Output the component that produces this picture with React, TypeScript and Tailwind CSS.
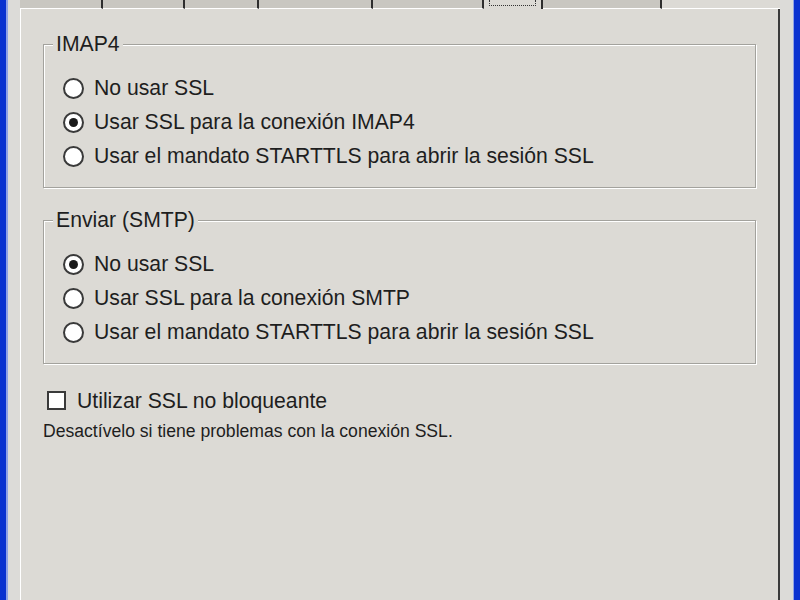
import { useState } from "react";

type Option = { id: string; label: string };

const imapOptions: Option[] = [
  { id: "none", label: "No usar SSL" },
  { id: "ssl", label: "Usar SSL para la conexión IMAP4" },
  { id: "starttls", label: "Usar el mandato STARTTLS para abrir la sesión SSL" },
];

const smtpOptions: Option[] = [
  { id: "none", label: "No usar SSL" },
  { id: "ssl", label: "Usar SSL para la conexión SMTP" },
  { id: "starttls", label: "Usar el mandato STARTTLS para abrir la sesión SSL" },
];

// tab widths along the strip, the selected one is drawn raised
const tabs = [83, 82, 74, 114, 111, 59, 119];
const selectedTab = 5;

function Radio({ checked, label, onClick }: { checked: boolean; label: string; onClick: () => void }) {
  return (
    <div className="flex items-center h-[34px] cursor-default" onClick={onClick}>
      <span className="w-[21px] h-[21px] rounded-full border-2 border-[#3a3a3a] bg-white flex items-center justify-center shrink-0">
        {checked && <span className="w-[9px] h-[9px] rounded-full bg-[#1a1a1a]" />}
      </span>
      <span className="ml-[10px]">{label}</span>
    </div>
  );
}

function GroupBox({ title, children }: { title: string; children: React.ReactNode }) {
  return (
    <div className="relative border border-[#a3a29d] shadow-[inset_1px_1px_0_#ffffff,1px_1px_0_#ffffff] pt-[26px] pb-[14px] pl-[19px]">
      <span className="absolute -top-[14px] left-[9px] px-[3px] bg-[#dcdad5] leading-[26px]">{title}</span>
      {children}
    </div>
  );
}

export default function App() {
  const [imap, setImap] = useState("ssl");
  const [smtp, setSmtp] = useState("none");
  const [nonBlocking, setNonBlocking] = useState(false);

  return (
    <div className="w-[800px] h-[600px] overflow-hidden flex bg-[#dcdad5] text-[#1e1e1e] text-[21.2px] font-['Liberation_Sans',Arial,sans-serif]">
      {/* window frame, left */}
      <div className="w-[6px] bg-[#0a32d0]" />
      <div className="w-[2px] bg-[#8fa2e6]" />
      <div className="w-[12px] bg-[#dcdbd8]" />

      <div className="flex-1 flex flex-col">
        {/* tab strip */}
        <div className="h-[9px] flex bg-[#dcdad5]">
          {tabs.map((w, i) =>
            i === selectedTab ? (
              <div key={i} style={{ width: w }} className="relative bg-[#dcdad5] border-r-2 border-[#2e2e2e]">
                <div className="absolute left-[5px] right-[5px] top-0 h-[6px] border-b border-l border-r border-dotted border-[#333]" />
              </div>
            ) : (
              <div key={i} style={{ width: w }} className="bg-[#c9c7c1] border-r-2 border-[#2e2e2e] border-b border-b-white" />
            )
          )}
          <div className="flex-1 border-b border-white" />
        </div>

        {/* tab page */}
        <div className="flex-1 border-l border-white border-r-2 border-r-[#3a3a3a] pl-[22px] pr-[22px] pt-[35px]">
          <GroupBox title="IMAP4">
            {imapOptions.map((o) => (
              <Radio key={o.id} label={o.label} checked={imap === o.id} onClick={() => setImap(o.id)} />
            ))}
          </GroupBox>

          <div className="h-[32px]" />

          <GroupBox title="Enviar (SMTP)">
            {smtpOptions.map((o) => (
              <Radio key={o.id} label={o.label} checked={smtp === o.id} onClick={() => setSmtp(o.id)} />
            ))}
          </GroupBox>

          <div className="mt-[21px] ml-[4px] flex items-center cursor-default" onClick={() => setNonBlocking(!nonBlocking)}>
            <span className="w-[19px] h-[19px] border-2 border-[#3a3a3a] bg-white flex items-center justify-center text-[14px] leading-none">
              {nonBlocking ? "✓" : ""}
            </span>
            <span className="ml-[11px]">Utilizar SSL no bloqueante</span>
          </div>
          <div className="mt-[1px] text-[17.6px]">Desactívelo si tiene problemas con la conexión SSL.</div>
        </div>
      </div>

      {/* window frame, right */}
      <div className="w-[13px] bg-[#dcdbd8]" />
      <div className="w-[1px] bg-[#8fa2e6]" />
      <div className="w-[6px] bg-[#0a32d0]" />
    </div>
  );
}
